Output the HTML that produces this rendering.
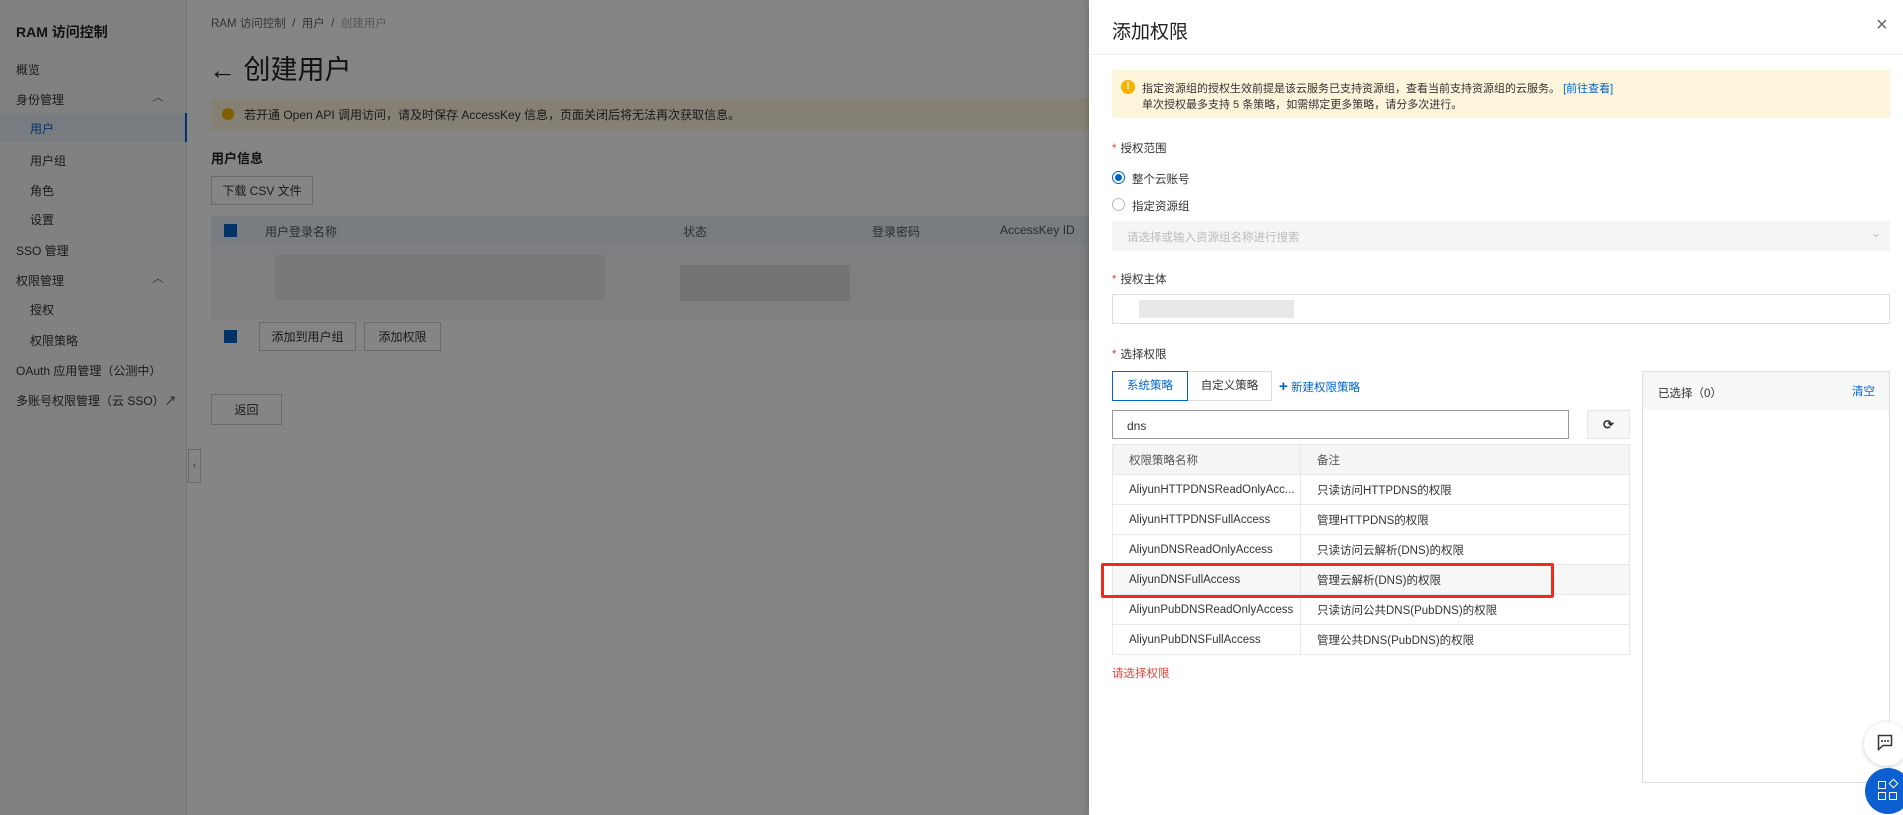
<!DOCTYPE html>
<html><head><meta charset="utf-8"><style>
*{box-sizing:border-box;margin:0;padding:0}
body{width:1903px;height:815px;overflow:hidden;position:relative;background:#fff;font-family:"Liberation Sans","Noto Sans CJK SC",sans-serif;color:#333;font-size:12px}
.a{position:absolute;white-space:nowrap}
.side{position:absolute;left:0;top:0;width:187px;height:815px;background:#f7f8fa;border-right:1px solid #e3e3e3}
.mi{position:absolute;left:16px;font-size:12px;color:#333}
.sub{left:30px}
.btn{position:absolute;border:1px solid #ccc;background:#fff;font-size:12px;display:flex;align-items:center;justify-content:center;color:#333}
.overlay{position:absolute;left:0;top:0;width:1089px;height:815px;background:rgba(0,0,0,0.48)}
.panel{position:absolute;left:1089px;top:0;width:814px;height:815px;background:#fff;box-shadow:-2px 0 6px rgba(0,0,0,.15)}
.req{color:#e0483c;margin-right:4px}
td{border-bottom:1px solid #e8e8e8;padding-left:16px;height:30px;font-size:11.5px;color:#333}
</style></head><body>
<div class="side">
 <div class="a" style="left:16px;top:22px;font-size:14px;font-weight:bold;color:#222">RAM 访问控制</div>
 <div class="mi a" style="top:61px">概览</div>
 <div class="mi a" style="top:91px">身份管理</div><div class="a" style="left:152px;top:88px;color:#777">︿</div>
 <div class="a" style="left:0;top:113px;width:187px;height:29px;background:#e6ebf3;border-right:2px solid #0064c8"></div>
 <div class="mi a sub" style="top:120px;color:#0064c8">用户</div>
 <div class="mi a sub" style="top:152px">用户组</div>
 <div class="mi a sub" style="top:182px">角色</div>
 <div class="mi a sub" style="top:211px">设置</div>
 <div class="mi a" style="top:242px">SSO 管理</div>
 <div class="mi a" style="top:272px">权限管理</div><div class="a" style="left:152px;top:269px;color:#777">︿</div>
 <div class="mi a sub" style="top:301px">授权</div>
 <div class="mi a sub" style="top:332px">权限策略</div>
 <div class="mi a" style="top:362px">OAuth 应用管理（公测中）</div>
 <div class="mi a" style="top:392px">多账号权限管理（云 SSO）↗</div>
</div>
<div class="a" style="left:188px;top:449px;width:13px;height:34px;background:#fff;border:1px solid #ccc;font-size:10px;color:#666;text-align:center;line-height:32px">‹</div>
<div class="a" style="left:211px;top:15px;color:#666;font-size:11.5px">RAM 访问控制 &nbsp;/&nbsp; 用户 &nbsp;/&nbsp; <span style="color:#aaa">创建用户</span></div>
<div class="a" style="left:209px;top:48px;font-size:27px;color:#222">←&nbsp;创建用户</div>
<div class="a" style="left:211px;top:98px;width:878px;height:32px;background:#fdf6dc"></div>
<div class="a" style="left:222px;top:108px;width:12px;height:12px;border-radius:50%;background:#f5b400"></div>
<div class="a" style="left:244px;top:106px;color:#333">若开通 Open API 调用访问，请及时保存 AccessKey 信息，页面关闭后将无法再次获取信息。</div>
<div class="a" style="left:211px;top:148px;font-size:13px;font-weight:bold;color:#222">用户信息</div>
<div class="btn" style="left:211px;top:176px;width:102px;height:29px">下载 CSV 文件</div>
<div class="a" style="left:211px;top:216px;width:878px;height:29px;background:#e8edf5"></div>
<div class="a" style="left:224px;top:224px;width:13px;height:13px;background:#0064c8"></div>
<div class="a" style="left:265px;top:223px;color:#555">用户登录名称</div>
<div class="a" style="left:683px;top:223px;color:#555">状态</div>
<div class="a" style="left:872px;top:223px;color:#555">登录密码</div>
<div class="a" style="left:1000px;top:223px;color:#555">AccessKey ID</div>
<div class="a" style="left:211px;top:245px;width:878px;height:75px;background:#f1f3f6"></div>
<div class="a" style="left:275px;top:255px;width:330px;height:45px;background:#e4e6ea"></div>
<div class="a" style="left:680px;top:265px;width:170px;height:36px;background:#dcdee2"></div>
<div class="a" style="left:224px;top:330px;width:13px;height:13px;background:#0064c8"></div>
<div class="btn" style="left:259px;top:322px;width:97px;height:29px">添加到用户组</div>
<div class="btn" style="left:364px;top:322px;width:77px;height:29px">添加权限</div>
<div class="btn" style="left:211px;top:394px;width:71px;height:31px">返回</div>
<div class="overlay"></div>

<div class="panel">
 <div class="a" style="left:23px;top:17px;font-size:19px;color:#222">添加权限</div>
 <div class="a" style="left:787px;top:14px;font-size:20px;color:#666">×</div>
 <div class="a" style="left:0;top:54px;width:814px;height:1px;background:#eee"></div>
 <div class="a" style="left:23px;top:70px;width:778px;height:48px;background:#fdf4dc"></div>
 <div class="a" style="left:32px;top:80px;width:14px;height:14px;border-radius:50%;background:#f5b400;color:#fff;font-size:10px;text-align:center;line-height:14px;font-weight:bold">!</div>
 <div class="a" style="left:53px;top:80px;font-size:11px">指定资源组的授权生效前提是该云服务已支持资源组，查看当前支持资源组的云服务。 <span style="color:#0064c8">[前往查看]</span></div>
 <div class="a" style="left:53px;top:96px;font-size:11px">单次授权最多支持 5 条策略，如需绑定更多策略，请分多次进行。</div>
 <div class="a" style="left:23px;top:140px;font-size:11.5px"><span class="req">*</span>授权范围</div>
 <div class="a" style="left:23px;top:171px;width:13px;height:13px;border-radius:50%;border:1px solid #0064c8"><div style="margin:2px;width:7px;height:7px;border-radius:50%;background:#0064c8"></div></div>
 <div class="a" style="left:43px;top:171px;font-size:11.5px">整个云账号</div>
 <div class="a" style="left:23px;top:198px;width:13px;height:13px;border-radius:50%;border:1px solid #bbb"></div>
 <div class="a" style="left:43px;top:198px;font-size:11.5px">指定资源组</div>
 <div class="a" style="left:23px;top:221px;width:778px;height:30px;background:#f5f5f5"></div>
 <div class="a" style="left:38px;top:229px;color:#bbb;font-size:11.5px">请选择或输入资源组名称进行搜索</div>
 <div class="a" style="left:782px;top:226px;color:#bbb">⌄</div>
 <div class="a" style="left:23px;top:271px;font-size:11.5px"><span class="req">*</span>授权主体</div>
 <div class="a" style="left:23px;top:294px;width:778px;height:30px;border:1px solid #ddd"></div>
 <div class="a" style="left:50px;top:300px;width:155px;height:18px;background:#e8e8e8"></div>
 <div class="a" style="left:23px;top:346px;font-size:11.5px"><span class="req">*</span>选择权限</div>
 <div class="a" style="left:23px;top:371px;width:76px;height:30px;border:1px solid #0064c8;color:#0064c8;text-align:center;line-height:28px;font-size:11.5px">系统策略</div>
 <div class="a" style="left:99px;top:371px;width:84px;height:30px;border:1px solid #ddd;border-left:none;text-align:center;line-height:28px;font-size:11.5px">自定义策略</div>
 <div class="a" style="left:190px;top:378px;color:#0064c8;font-size:11.5px"><b style="font-size:15px">+</b> 新建权限策略</div>
 <div class="a" style="left:553px;top:371px;width:248px;height:412px;border:1px solid #ddd"></div>
 <div class="a" style="left:554px;top:372px;width:246px;height:38px;background:#f7f7f7"></div>
 <div class="a" style="left:569px;top:385px;font-size:11.5px">已选择（0）</div>
 <div class="a" style="left:763px;top:383px;color:#0064c8;font-size:11.5px">清空</div>
 <div class="a" style="left:23px;top:410px;width:457px;height:29px;border:1px solid #999"></div>
 <div class="a" style="left:38px;top:419px">dns</div>
 <div class="a" style="left:498px;top:410px;width:43px;height:29px;border:1px solid #e5e5e5;background:#f7f7f7;text-align:center;line-height:27px;font-size:13px;font-weight:bold">⟳</div>
 <table class="a" style="left:23px;top:444px;width:518px;border-collapse:collapse;border:1px solid #e8e8e8">
  <tr style="background:#f5f5f5"><td style="width:188px;border-right:1px solid #e8e8e8;color:#555">权限策略名称</td><td style="color:#555">备注</td></tr>
  <tr><td style="border-right:1px solid #e8e8e8">AliyunHTTPDNSReadOnlyAcc...</td><td>只读访问HTTPDNS的权限</td></tr>
  <tr><td style="border-right:1px solid #e8e8e8">AliyunHTTPDNSFullAccess</td><td>管理HTTPDNS的权限</td></tr>
  <tr><td style="border-right:1px solid #e8e8e8">AliyunDNSReadOnlyAccess</td><td>只读访问云解析(DNS)的权限</td></tr>
  <tr style="background:#f7f7f7"><td style="border-right:1px solid #e8e8e8">AliyunDNSFullAccess</td><td>管理云解析(DNS)的权限</td></tr>
  <tr><td style="border-right:1px solid #e8e8e8">AliyunPubDNSReadOnlyAccess</td><td>只读访问公共DNS(PubDNS)的权限</td></tr>
  <tr><td style="border-right:1px solid #e8e8e8">AliyunPubDNSFullAccess</td><td>管理公共DNS(PubDNS)的权限</td></tr>
 </table>
 <div class="a" style="left:12px;top:563px;width:453px;height:35px;border:3px solid #f02a1e;border-radius:2px"></div>
 <div class="a" style="left:23px;top:665px;color:#e0483c;font-size:11.5px">请选择权限</div>
 <div class="a" style="left:775px;top:722px;width:44px;height:44px;border-radius:50%;background:#fff;box-shadow:0 1px 5px rgba(0,0,0,.2)"></div>
 <svg class="a" style="left:788px;top:734px" width="16" height="18" viewBox="0 0 16 18"><path d="M1.5 1.5h13v10H6l-4.5 4v-14z" fill="none" stroke="#333" stroke-width="1.5"/><circle cx="5" cy="7" r="1" fill="#333"/><circle cx="8" cy="7" r="1" fill="#333"/><circle cx="11" cy="7" r="1" fill="#333"/></svg>
 <div class="a" style="left:776px;top:768px;width:46px;height:46px;border-radius:50%;background:#0b5fd0"></div>
 <div class="a" style="left:789px;top:781px;width:8px;height:8px;border:1.5px solid #fff"></div>
 <div class="a" style="left:789px;top:792px;width:8px;height:8px;border:1.5px solid #fff"></div>
 <div class="a" style="left:800px;top:792px;width:8px;height:8px;border:1.5px solid #fff"></div>
 <div class="a" style="left:801px;top:780px;width:7px;height:7px;border:1.5px solid #fff;transform:rotate(45deg)"></div>
</div>
</body></html>
